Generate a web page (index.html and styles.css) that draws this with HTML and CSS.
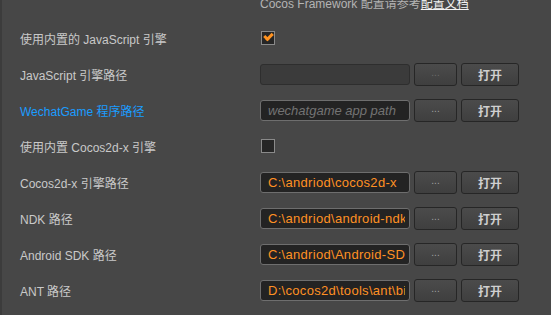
FILE: index.html
```html
<!DOCTYPE html>
<html lang="zh">
<head>
  <meta charset="UTF-8" />
  <title>原生开发环境</title>
  <link rel="stylesheet" href="styles.css">
</head>
<body>
  <div class="panel">

    <!-- 提示 -->
    <div class="row">
      <div class="label"></div>
      <div class="hint">Cocos Framework 配置请参考<a href="#">配置文档</a></div>
    </div>

    <div class="row">
      <div class="label">使用内置的 JavaScript 引擎</div>
      <div class="check checked"></div>
    </div>

    <div class="row">
      <div class="label">JavaScript 引擎路径</div>
      <div class="field">
        <div class="input disabled"></div>
        <button class="btn dots dim">...</button>
        <button class="btn open">打开</button>
      </div>
    </div>

    <div class="row">
      <div class="label blue">WechatGame 程序路径</div>
      <div class="field">
        <div class="input"><span class="placeholder">wechatgame app path</span></div>
        <button class="btn dots">...</button>
        <button class="btn open">打开</button>
      </div>
    </div>

    <div class="row">
      <div class="label">使用内置 Cocos2d-x 引擎</div>
      <div class="check"></div>
    </div>

    <div class="row">
      <div class="label">Cocos2d-x 引擎路径</div>
      <div class="field">
        <div class="input"><span class="value">C:\andriod\cocos2d-x</span></div>
        <button class="btn dots">...</button>
        <button class="btn open">打开</button>
      </div>
    </div>

    <div class="row">
      <div class="label">NDK 路径</div>
      <div class="field">
        <div class="input"><span class="value">C:\andriod\android-ndk-r10e</span></div>
        <button class="btn dots">...</button>
        <button class="btn open">打开</button>
      </div>
    </div>

    <div class="row">
      <div class="label">Android SDK 路径</div>
      <div class="field">
        <div class="input"><span class="value">C:\andriod\Android-SDK</span></div>
        <button class="btn dots">...</button>
        <button class="btn open">打开</button>
      </div>
    </div>

    <div class="row">
      <div class="label">ANT 路径</div>
      <div class="field">
        <div class="input"><span class="value">D:\cocos2d\tools\ant\bin</span></div>
        <button class="btn dots">...</button>
        <button class="btn open">打开</button>
      </div>
    </div>

  </div>
</body>
</html>
```

FILE: styles.css
```css
body {
  margin: 0;
  padding: 0;
  overflow: hidden;
  height: 100vh;
  background: #474747;
  border-left: 2px solid #3c3c3c;
  box-sizing: border-box;
  font-family: 'Liberation Sans', 'Noto Sans CJK SC', sans-serif;
  font-size: 12px;
  color: #c9c9c9;
}

.panel {
  margin-top: -16px;
  padding-left: 18px;
}

.row {
  display: grid;
  grid-template-columns: 240px auto;
  align-items: center;
  height: 36px;
}

.label {
  white-space: nowrap;
}

.label.blue {
  color: #1a9cff;
}

/* 提示文字 */
.hint {
  color: #b4b4b4;
  white-space: nowrap;
}

.hint a {
  color: #f2f2f2;
  text-decoration: underline;
}

/* 复选框 */
.check {
  width: 12px;
  height: 12px;
  background: #262626;
  border: 1px solid #8a8a8a;
  margin-left: 1px;
  position: relative;
}

.check.checked::after {
  content: '';
  position: absolute;
  left: 2px;
  top: 1px;
  width: 6px;
  height: 3px;
  border-left: 3px solid #ff9321;
  border-bottom: 3px solid #ff9321;
  transform: rotate(-45deg);
}

/* 路径输入 */
.field {
  display: flex;
  align-items: center;
  gap: 4px;
}

.input {
  box-sizing: border-box;
  width: 150px;
  height: 21px;
  background: #232323;
  border: 1px solid #6e6e6e;
  border-radius: 3px;
  padding: 0 4px 0 7px;
  white-space: nowrap;
  display: flex;
  align-items: center;
}

.input.disabled {
  background: #3b3b3b;
  border-color: #2e2e2e;
}

.value,
.placeholder {
  flex: 1;
  min-width: 0;
  overflow: hidden;
  font-size: 13px;
}

.value {
  color: #ff9124;
  letter-spacing: 0.3px;
}

.placeholder {
  color: #737373;
  font-style: italic;
}

.btn {
  height: 23px;
  background: linear-gradient(#4b4b4b, #3f3f3f);
  border: 1px solid #262626;
  border-radius: 3px;
  color: #b0b0b0;
  font-family: inherit;
  font-size: 12px;
  padding: 0;
  margin: 0;
}

.btn.dots {
  width: 43px;
  font-size: 10px;
  color: #a0a0a0;
  padding-bottom: 3px;
}

.btn.dots.dim {
  color: #6a6a6a;
}

.btn.open {
  width: 58px;
  font-weight: bold;
  color: #cfcfcf;
}
```
